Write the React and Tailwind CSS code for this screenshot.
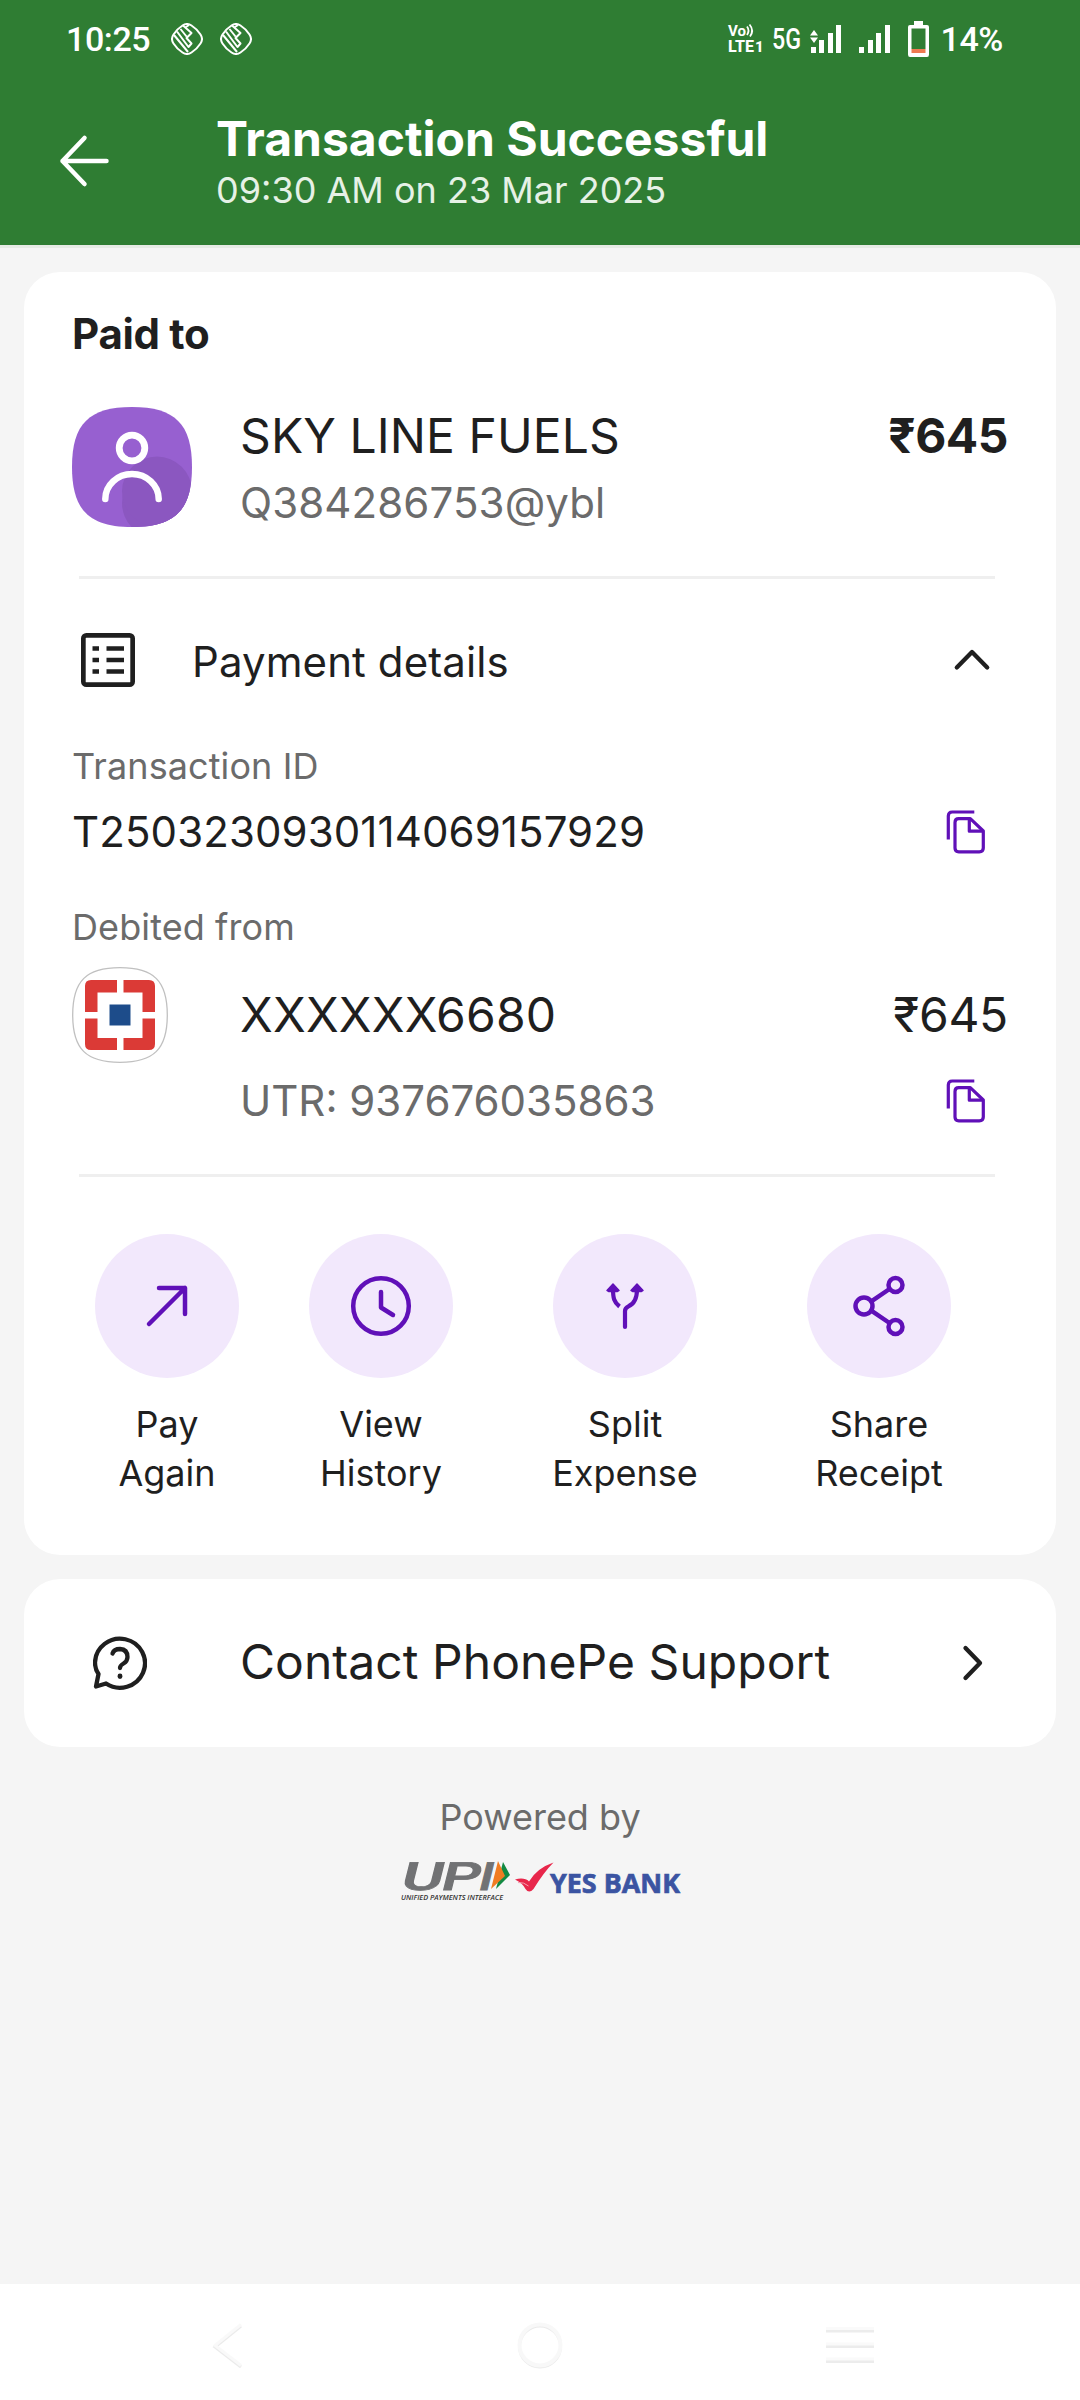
import React from "react";

const actions = [
  { id: 1, top: "Pay", bottom: "Again", icon: PayIcon, spacing: "ml-[23px]" },
  { id: 2, top: "View", bottom: "History", icon: ClockIcon, spacing: "ml-[70px]" },
  { id: 3, top: "Split", bottom: "Expense", icon: SplitIcon, spacing: "ml-[100px]" },
  { id: 4, top: "Share", bottom: "Receipt", icon: ShareIcon, spacing: "ml-[110px]" },
];

function PayIcon() {
  return (
    <svg className="w-18 h-18" viewBox="0 0 72 72" fill="none" stroke="#6010b8" strokeWidth="4.5" strokeLinecap="round" strokeLinejoin="round">
      <path d="M18 54L54 18M28 18H54V44" />
    </svg>
  );
}

function ClockIcon() {
  return (
    <svg className="w-18 h-18" viewBox="0 0 72 72" fill="none" stroke="#6010b8" strokeWidth="4.5" strokeLinecap="round" strokeLinejoin="round">
      <circle cx="36" cy="36" r="27.800" />
      <path d="M36 22V37.500L48 45" />
    </svg>
  );
}

function SplitIcon() {
  return (
    <svg className="w-18 h-18" viewBox="0 0 72 72" fill="none" stroke="#6010b8" strokeWidth="4.2">
      <path d="M36 57V41C36 38 37.500 37.200 39.500 36.300C45 34 48 29 48 19" strokeLinecap="round" />
      <path d="M24 19C24 28 25 32 30.500 36.500" />
      <path d="M24 14L30 20.500L28.500 21.500H19.500L18 20.500ZM48 14L54 20.500L52.500 21.500H43.500L42 20.500Z" fill="#6010b8" strokeWidth="1.500" strokeLinejoin="round" />
    </svg>
  );
}

function ShareIcon() {
  return (
    <svg className="w-18 h-18" viewBox="0 0 72 72" fill="none" stroke="#6010b8" strokeWidth="4.5">
      <circle cx="21" cy="36" r="8.500" />
      <circle cx="52.500" cy="15" r="7" />
      <circle cx="52.500" cy="57" r="7" />
      <path d="M28.300 31.300L46.500 19M28.300 40.700L46.500 53" />
    </svg>
  );
}

function CopyIcon() {
  return (
    <svg className="w-12 h-12 mr-[19px]" viewBox="0 0 48 48" fill="none" stroke="#6010b8" strokeWidth="3.2" strokeLinejoin="round">
      <path d="M7.300 31.500V8Q7.300 4 11.300 4H33.300" />
      <path d="M17.800 10.700H29.300L42.300 23V40Q42.300 43.800 38.300 43.800H17.800Q14 43.800 14 40V14.500Q14 10.700 17.800 10.700Z" />
      <path d="M28.300 11V23.200H41.800" />
    </svg>
  );
}

function NotificationIcon() {
  return (
    <svg className="w-8 h-8" viewBox="0 0 32 32" fill="none" stroke="white" strokeWidth="2" strokeLinejoin="round">
      <path d="M11.500 2.500Q16 -0.500 20.500 2.500Q26 6 29.500 11.500Q32.500 16 29.500 20.500Q26 26 20.500 29.500Q16 32.500 11.500 29.500Q6 26 2.500 20.500Q-0.500 16 2.500 11.500Q6 6 11.500 2.500Z" />
      <path d="M3 12L17 29M6 8.500L14.500 20L17.500 24L20.500 20.500L15.500 15L20.500 10L12 2.500M9.500 6L15.500 13.500M15 4L18 2" />
    </svg>
  );
}

function VolteIcon() {
  return (
    <svg className="w-9 h-8 overflow-visible" viewBox="0 0 36 32" fill="white">
      <text x="0" y="13" fontFamily="Roboto" fontWeight="700" fontSize="15" textLength="18" lengthAdjust="spacingAndGlyphs">Vo</text>
      <path d="M19 3.500Q22 7.500 19 12M21.500 1.500Q26.500 7.500 22 13.500" fill="none" stroke="white" strokeWidth="1.800" />
      <text x="0" y="29" fontFamily="Roboto" fontWeight="800" fontSize="17" textLength="26" lengthAdjust="spacingAndGlyphs">LTE</text>
      <text x="27" y="29" fontFamily="Roboto" fontWeight="800" fontSize="15">1</text>
    </svg>
  );
}

function SignalBars() {
  return (
    <div className="flex items-end gap-[3.500px] h-7">
      <div className="w-[5px] h-[6px] bg-white"></div>
      <div className="w-[5px] h-[13px] bg-white"></div>
      <div className="w-[5px] h-5 bg-white"></div>
      <div className="w-[5px] h-7 bg-white"></div>
    </div>
  );
}

function StatusBar() {
  return (
    <div className="flex items-center h-[78px] pl-[66px] pr-[77px] text-white font-['Roboto']">
      <span className="text-[34px] font-medium tracking-[-0.4px]">10:25</span>
      <div className="flex gap-[17px] ml-[21px]">
        <NotificationIcon />
        <NotificationIcon />
      </div>
      <div className="flex items-center ml-auto">
        <VolteIcon />
        <svg className="ml-2 w-[30px] h-8 overflow-visible" viewBox="0 0 30 32" fill="white">
          <text x="0" y="26" fontFamily="Roboto" fontSize="29" fontWeight="500" textLength="29" lengthAdjust="spacingAndGlyphs">5G</text>
        </svg>
        <div className="relative ml-[9px]">
          <SignalBars />
          <svg className="absolute -left-px top-[5px] w-2 h-[13px]" viewBox="0 0 8 13" fill="white">
            <path d="M4 0L8 5.500H0ZM4 13L0 7.500H8Z" />
          </svg>
        </div>
        <div className="ml-[18px]">
          <SignalBars />
        </div>
        <svg className="ml-[18px] w-[21px] h-9" viewBox="0 0 21 36">
          <path d="M6 0H15V4H19Q21 4 21 6V33.500Q21 36 19 36H2Q0 36 0 33.500V6Q0 4 2 4H6Z" fill="white" />
          <path d="M3.500 7.500H17.500V28H3.500Z" fill="#2f7d33" />
          <path d="M3.500 28H17.500V32H3.500Z" fill="#ef7a52" />
        </svg>
        <span className="ml-3 text-[34px] font-medium tracking-[-0.4px]">14%</span>
      </div>
    </div>
  );
}

function Header() {
  return (
    <header className="h-[248px] bg-[#2f7d33] border-b-3 border-[#e6ebe5]">
      <StatusBar />
      <div className="flex pl-[58px]">
        <svg className="w-[54px] h-[54px] mt-14" viewBox="0 0 54 54" fill="none" stroke="white" strokeWidth="4.500" strokeLinecap="round" strokeLinejoin="round">
          <path d="M48.500 27H4.500M26.500 4L4.500 27L26.500 50" />
        </svg>
        <div className="ml-[104px] mt-8">
          <h1 className="text-[48px] leading-[58px] font-bold text-white">Transaction Successful</h1>
          <p className="-mt-0.5 text-[36px] leading-12 text-[#e6f1e6]">09:30 AM on 23 Mar 2025</p>
        </div>
      </div>
    </header>
  );
}

function BankLogo() {
  return (
    <svg className="w-24 h-24" viewBox="0 0 96 96">
      <path d="M48 .7C82 .7 95.300 14 95.300 48S82 95.300 48 95.300.7 82 .7 48 14 .7 48 .7Z" fill="white" stroke="#c0c0c0" strokeWidth="1.300" />
      <path d="M19 13H45V25.500H25.500V45H13V19Q13 13 19 13ZM51.500 13H77Q83 13 83 19V45H70.500V25.500H51.500ZM13 51.500H25.500V71H45V83H19Q13 83 13 77ZM70.500 51.500H83V77Q83 83 77 83H51.500V71H70.500Z" fill="#db3a36" />
      <path d="M37.500 37.500H58.500V58.500H37.500Z" fill="#1d4c8a" />
    </svg>
  );
}

function Divider({ className }) {
  return <div className={`ml-[7px] mr-[13px] h-[3px] bg-[#efefef] ${className}`}></div>;
}

function PoweredBy() {
  return (
    <div className="flex flex-col items-center mt-[46px]">
      <p className="text-[36px] leading-12 text-[#6b6b6b]">Powered by</p>
      <div className="flex mt-[18px]">
        <svg className="w-[112px] h-11 overflow-visible" viewBox="0 0 112 44">
          <g transform="skewX(-14)" fontFamily="Roboto" fontWeight="500" fontSize="39" fill="#717274" stroke="#717274" strokeWidth="0.8">
            <text x="9" y="31" textLength="42" lengthAdjust="spacingAndGlyphs">U</text>
            <text x="49" y="31" textLength="39" lengthAdjust="spacingAndGlyphs">P</text>
            <text x="86" y="31" textLength="15" lengthAdjust="spacingAndGlyphs">I</text>
          </g>
          <path d="M105 3L112 16L98 30Z" fill="#128a43" />
          <path d="M100 2L107 17L93 30Z" fill="#f07c22" />
          <text x="3" y="40.500" fontFamily="Open Sans" fontWeight="600" fontStyle="italic" fontSize="7.500" fill="#333" textLength="102" lengthAdjust="spacingAndGlyphs">UNIFIED PAYMENTS INTERFACE</text>
        </svg>
        <svg className="ml-1 w-[168px] h-11" viewBox="0 0 168 44">
          <path d="M1 20.500C6 19 12 19 15 22.500Q23 9 39.500 3.500Q30 13 19.500 30Q15 35 11.500 30Q9 24.500 1 20.500Z" fill="#e8274b" />
          <path d="M4 23.500Q10 23 14.500 27" fill="none" stroke="#f5a3b2" strokeWidth="1" />
          <text x="36" y="34" fontFamily="Open Sans" fontWeight="700" fontSize="26.500" fill="#3b54a2" stroke="#3b54a2" strokeWidth="0.7" textLength="130" lengthAdjust="spacingAndGlyphs">YES BANK</text>
        </svg>
      </div>
    </div>
  );
}

function NavBar() {
  return (
    <nav className="flex items-center justify-between h-[116px] mt-auto bg-white px-[206px]">
      <svg className="w-12 h-14 mt-1.5" viewBox="0 0 48 56" fill="none" strokeWidth="3">
        <path d="M35 9L9 30L35 50" stroke="#ebebeb" />
        <path d="M35 7.500L9 28.500L35 48.500" stroke="#f9f9f9" />
      </svg>
      <svg className="w-14 h-14 mt-1.5" viewBox="0 0 56 56" fill="none" strokeWidth="3">
        <circle cx="28" cy="29.500" r="20.500" stroke="#eaeaea" />
        <circle cx="28" cy="28" r="20.500" stroke="#f8f8f8" strokeWidth="4" />
      </svg>
      <svg className="w-12 h-14 mt-1.5" viewBox="0 0 48 56" fill="none">
        <path d="M0 14H48M0 29.500H48M0 44.500H48" stroke="#ececec" strokeWidth="3" />
        <path d="M0 11.500H48M0 27H48M0 42H48" stroke="#fafafa" strokeWidth="3" />
      </svg>
    </nav>
  );
}

export default function App() {
  return (
    <div className="flex flex-col w-[1080px] h-[2400px] bg-[#f5f5f5] text-[#1f1f1f] font-['Inter',sans-serif] whitespace-nowrap overflow-hidden">
      <Header />

      <main className="px-6 pt-6">
        <section className="bg-white rounded-[36px] px-12 pt-8 h-[1283px]">
          <h2 className="text-[42px] leading-[60px] font-bold tracking-[-0.3px]">Paid to</h2>

          {/* Payee */}
          <div className="flex items-start h-[120px] mt-[43px]">
            <svg className="w-[120px] h-[120px]" viewBox="0 0 120 120" fill="none">
              <clipPath id="avatar">
                <path d="M60 0C103 0 120 17 120 60S103 120 60 120 0 103 0 60 17 0 60 0Z" />
              </clipPath>
              <g clipPath="url(#avatar)">
                <rect width="120" height="120" fill="#9760d0" />
                <circle cx="85" cy="96" r="35" fill="#8b57c0" />
                <circle cx="85" cy="84.500" r="35" fill="#8b57c0" />
              </g>
              <circle cx="60" cy="41" r="12.800" stroke="white" strokeWidth="6.800" />
              <path d="M33.300 92A26.700 25 0 0 1 86.700 92" stroke="white" strokeWidth="6.500" strokeLinecap="round" />
            </svg>
            <div className="ml-12">
              <p className="text-[48px] leading-[58px] tracking-[0.1px]">SKY LINE FUELS</p>
              <p className="text-[42px] leading-14 mt-2.5 tracking-[0.1px] text-[#6b6b6b]">Q384286753@ybl</p>
            </div>
            <span className="ml-auto text-[48px] leading-[58px] font-bold tracking-[-0.5px]">₹645</span>
          </div>

          <Divider className="mt-[49px]" />

          <div className="flex items-center h-[54px] mt-[54px]">
            <svg className="w-[54px] h-[54px] ml-[9px]" viewBox="0 0 54 54" fill="none" stroke="#1f1f1f" strokeWidth="4.700">
              <rect x="2.350" y="2.350" width="49.300" height="49.300" rx="3" />
              <path d="M11.500 15.500H18M25.500 15.500H43M11.500 27H18M25.500 27H43M11.500 38.500H18M25.500 38.500H43" strokeWidth="4.300" />
            </svg>
            <span className="ml-[57px] pt-0.5 text-[42px] tracking-[0.1px]">Payment details</span>
            <svg className="w-12 h-12 ml-auto mr-3" viewBox="0 0 48 48" fill="none" stroke="#1f1f1f" strokeWidth="4.300" strokeLinecap="round" strokeLinejoin="round">
              <path d="M8.800 31.500L24 16L39.200 31.500" />
            </svg>
          </div>

          <p className="mt-[55px] text-[36px] leading-12 tracking-[0.1px] text-[#6b6b6b]">Transaction ID</p>
          <div className="flex items-center justify-between h-[60px] mt-3">
            <span className="pb-0.5 text-[42px] tracking-[0.1px]">T2503230930114069157929</span>
            <CopyIcon />
          </div>

          <p className="mt-[41px] text-[36px] leading-12 tracking-[0.1px] text-[#6b6b6b]">Debited from</p>
          <div className="flex items-center h-24 mt-4">
            <BankLogo />
            <span className="ml-[72px] text-[48px] tracking-[0.2px]">XXXXXX6680</span>
            <span className="ml-auto text-[48px] tracking-[-0.3px]">₹645</span>
          </div>
          <div className="flex items-center justify-between h-12 mt-[14px] pl-[168px]">
            <span className="pb-0.5 text-[42px] text-[#6b6b6b]">UTR: 937676035863</span>
            <CopyIcon />
          </div>

          <Divider className="mt-[49px]" />

          <div className="flex mt-[57px]">
            {actions.map((action) => {
              const Icon = action.icon;
              return (
                <div key={action.id} className={`flex flex-col items-center w-36 ${action.spacing}`}>
                  <div className="flex items-center justify-center w-36 h-36 rounded-full bg-[#f2e8fc]">
                    <Icon />
                  </div>
                  <p className="mt-[22px] text-[36px] leading-[49px] text-center">
                    {action.top}
                    <br />
                    {action.bottom}
                  </p>
                </div>
              );
            })}
          </div>
        </section>

        {/* Support */}
        <section className="flex items-center h-[168px] mt-6 pl-[69px] pr-[60px] bg-white rounded-[36px]">
          <svg className="w-[54px] h-[54px]" viewBox="0 0 54 54" fill="none" stroke="#1f1f1f" strokeWidth="4.300" strokeLinecap="round" strokeLinejoin="round">
            <path d="M5.500 38Q2 33 2 26.500A25 24.500 0 1 1 13 47.500L3 50.500Z" />
            <path d="M19.500 17.500Q21 13 27 13Q34.500 13.500 34.500 21Q34.500 25 30.500 27.500Q27 29.500 27 32" />
            <path d="M27 40V40.500" strokeWidth="4.800" />
          </svg>
          <span className="ml-[93px] pb-0.5 text-[48px] tracking-[0.05px]">Contact PhonePe Support</span>
          <svg className="w-12 h-12 ml-auto" viewBox="0 0 48 48" fill="none" stroke="#1f1f1f" strokeWidth="4.300" strokeLinecap="round" strokeLinejoin="round">
            <path d="M17.500 9L32 24L17.500 39" />
          </svg>
        </section>
      </main>

      <PoweredBy />
      <NavBar />
    </div>
  );
}
